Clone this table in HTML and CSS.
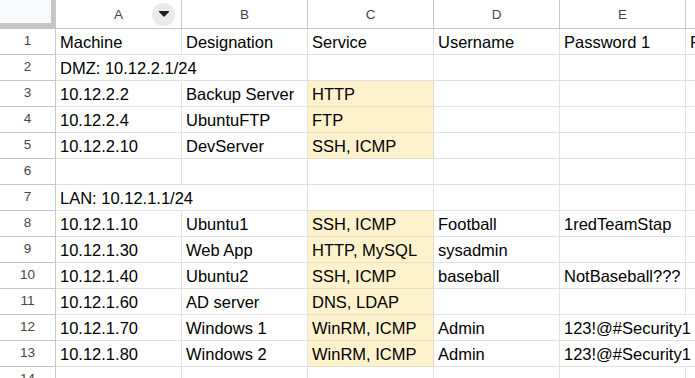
FILE: index.html
```html
<!DOCTYPE html>
<html>
<head>
<meta charset="utf-8">
<link rel="stylesheet" href="styles.css">
</head>
<body>
<div class="sheet">
  <div class="corner"></div>
  <div class="colhead colhead-a">A
    <span class="filter-btn"><svg width="10" height="6" viewBox="0 0 10 6"><path d="M0 0H10V1L5 6L0 1Z" fill="#1f1f1f"/></svg></span>
  </div>
  <div class="colhead">B</div>
  <div class="colhead">C</div>
  <div class="colhead">D</div>
  <div class="colhead">E</div>
  <div class="colhead">F</div>

  <div class="rowhead">1</div>
  <div class="cell">Machine</div><div class="cell">Designation</div><div class="cell">Service</div><div class="cell">Username</div><div class="cell">Password 1</div><div class="cell">Password 2</div>

  <div class="rowhead">2</div>
  <div class="cell spill">DMZ: 10.12.2.1/24</div><div class="cell"></div><div class="cell"></div><div class="cell"></div><div class="cell"></div><div class="cell"></div>

  <div class="rowhead">3</div>
  <div class="cell">10.12.2.2</div><div class="cell">Backup Server</div><div class="cell hl">HTTP</div><div class="cell"></div><div class="cell"></div><div class="cell"></div>

  <div class="rowhead">4</div>
  <div class="cell">10.12.2.4</div><div class="cell">UbuntuFTP</div><div class="cell hl">FTP</div><div class="cell"></div><div class="cell"></div><div class="cell"></div>

  <div class="rowhead">5</div>
  <div class="cell">10.12.2.10</div><div class="cell">DevServer</div><div class="cell hl">SSH, ICMP</div><div class="cell"></div><div class="cell"></div><div class="cell"></div>

  <div class="rowhead">6</div>
  <div class="cell"></div><div class="cell"></div><div class="cell"></div><div class="cell"></div><div class="cell"></div><div class="cell"></div>

  <div class="rowhead">7</div>
  <div class="cell spill">LAN: 10.12.1.1/24</div><div class="cell"></div><div class="cell"></div><div class="cell"></div><div class="cell"></div><div class="cell"></div>

  <div class="rowhead">8</div>
  <div class="cell">10.12.1.10</div><div class="cell">Ubuntu1</div><div class="cell hl">SSH, ICMP</div><div class="cell">Football</div><div class="cell">1redTeamStap</div><div class="cell"></div>

  <div class="rowhead">9</div>
  <div class="cell">10.12.1.30</div><div class="cell">Web App</div><div class="cell hl">HTTP, MySQL</div><div class="cell">sysadmin</div><div class="cell"></div><div class="cell"></div>

  <div class="rowhead">10</div>
  <div class="cell">10.12.1.40</div><div class="cell">Ubuntu2</div><div class="cell hl">SSH, ICMP</div><div class="cell">baseball</div><div class="cell">NotBaseball???</div><div class="cell"></div>

  <div class="rowhead">11</div>
  <div class="cell">10.12.1.60</div><div class="cell">AD server</div><div class="cell hl">DNS, LDAP</div><div class="cell"></div><div class="cell"></div><div class="cell"></div>

  <div class="rowhead">12</div>
  <div class="cell">10.12.1.70</div><div class="cell">Windows 1</div><div class="cell hl">WinRM, ICMP</div><div class="cell">Admin</div><div class="cell spill">123!@#Security1</div><div class="cell"></div>

  <div class="rowhead">13</div>
  <div class="cell">10.12.1.80</div><div class="cell">Windows 2</div><div class="cell hl">WinRM, ICMP</div><div class="cell">Admin</div><div class="cell spill">123!@#Security1</div><div class="cell"></div>

  <div class="rowhead">14</div>
  <div class="cell"></div><div class="cell"></div><div class="cell"></div><div class="cell"></div><div class="cell"></div><div class="cell"></div>
</div>
</body>
</html>
```
FILE: styles.css
```css
html, body {
  margin: 0;
  padding: 0;
  background: #ffffff;
  overflow: hidden;
}

.sheet {
  display: grid;
  grid-template-columns: 56px repeat(5, 126px) 126px;
  grid-template-rows: 29px repeat(14, 26px);
  font-family: "Liberation Sans", Arial, sans-serif;
  width: 695px;
  height: 378px;
  overflow: hidden;
}

.sheet > div {
  box-sizing: border-box;
}

.corner {
  background: #f8f9fa;
  border-right: 1px solid #c4c7c5;
  border-bottom: 1px solid #c4c7c5;
  box-shadow: inset -4px -5px 0 #c4c7c5;
}

.colhead {
  position: relative;
  display: flex;
  align-items: center;
  justify-content: center;
  border-right: 1px solid #c4c7c5;
  border-bottom: 1px solid #c4c7c5;
  font-size: 13.5px;
  color: #444746;
  padding-top: 1px;
}

.filter-btn {
  position: absolute;
  left: 96px;
  top: 3px;
  width: 23px;
  height: 23px;
  border-radius: 50%;
  background: #e9eaea;
  display: flex;
  align-items: center;
  justify-content: center;
}

.filter-btn svg {
  display: block;
  margin-top: -1px;
}

.rowhead {
  display: flex;
  align-items: center;
  justify-content: center;
  border-right: 1px solid #c4c7c5;
  border-bottom: 1px solid #c4c7c5;
  font-size: 13.5px;
  color: #444746;
  padding-bottom: 2px;
}

.cell {
  border-right: 1px solid #e1e1e1;
  border-bottom: 1px solid #e1e1e1;
  font-size: 16.5px;
  color: #000000;
  line-height: 23px;
  padding: 2px 4px 0 4px;
  white-space: nowrap;
  overflow: hidden;
}

.cell.spill {
  overflow: visible;
  border-right-color: transparent;
  position: relative;
  z-index: 1;
}

.cell.hl {
  background: #fdf2cc;
  border-right-color: #e3dcc4;
  border-bottom-color: #e8e0c6;
}
```
